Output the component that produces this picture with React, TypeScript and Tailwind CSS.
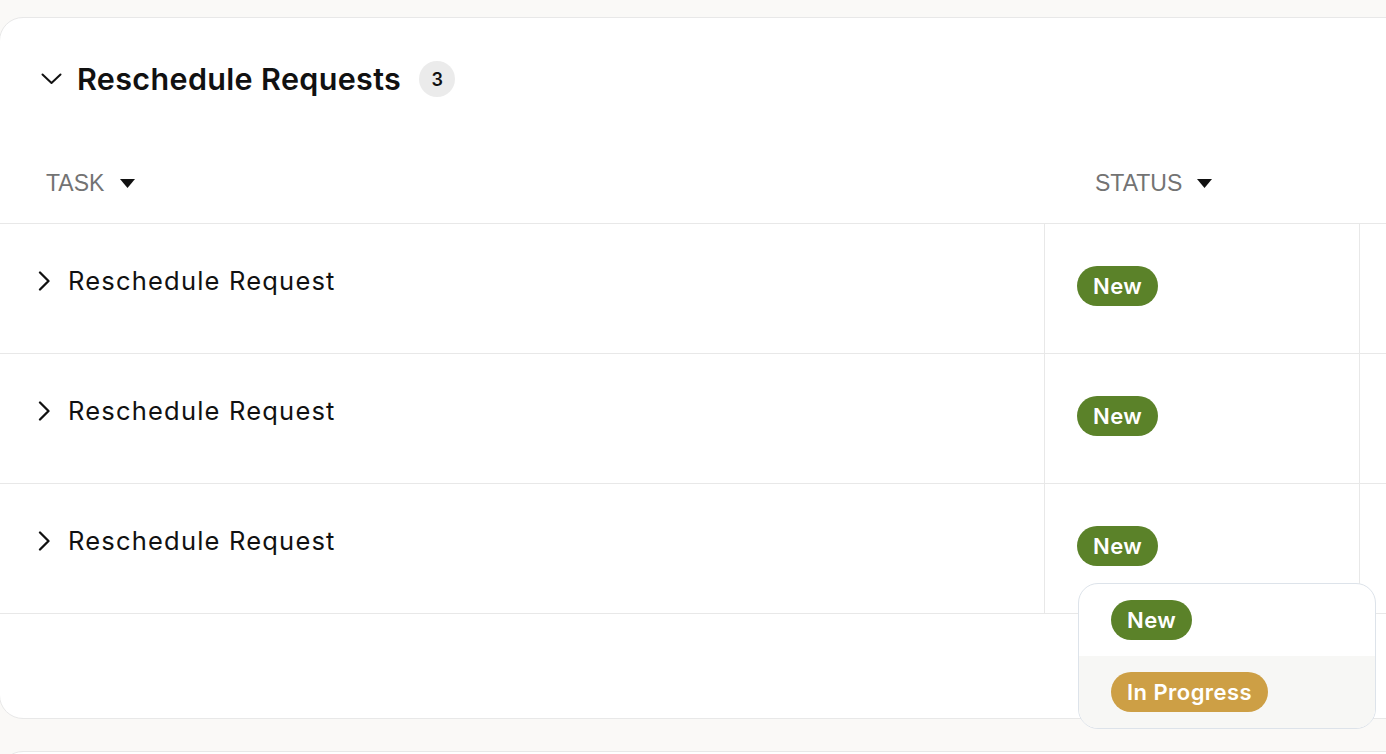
const rows = ['Reschedule Request', 'Reschedule Request', 'Reschedule Request'];

const SortCaret = () => (
  <svg width="15" height="9" viewBox="0 0 15 9" className="shrink-0">
    <path d="M0 0 L15 0 L7.5 9 Z" fill="#111" />
  </svg>
);

const Badge = ({ label, tone }: { label: string; tone: 'green' | 'gold' }) => (
  <span
    className={
      'inline-flex h-[40px] items-center rounded-full px-[16px] text-[22px] font-semibold leading-none tracking-[0.45px] text-white ' +
      (tone === 'green' ? 'bg-[#5b8229]' : 'bg-[#cd9f45]')
    }
  >
    {label}
  </span>
);

export default function App() {
  return (
    <div className="h-screen overflow-hidden bg-[#faf9f7] pt-[17px] font-['Inter',sans-serif] text-[#111]">
      {/* main card */}
      <div className="relative -ml-px h-[702px] w-[1440px] rounded-[24px] border border-[#e8e8e8] bg-white">
        <div className="flex h-[122px] items-center pl-[41px]">
          <svg width="21" height="12" viewBox="0 0 21 12" className="shrink-0">
            <path d="M1.5 1.5 L10.5 10 L19.5 1.5" fill="none" stroke="#111" strokeWidth="2" strokeLinecap="round" strokeLinejoin="round" />
          </svg>
          <h2 className="ml-[15px] text-[30.5px] font-semibold tracking-[0.35px]">Reschedule Requests</h2>
          <span className="ml-[18px] flex h-[36px] w-[36px] items-center justify-center rounded-full bg-[#ebebeb] text-[18px] font-semibold">
            3
          </span>
        </div>

        {/* header */}
        <div className="grid h-[84px] grid-cols-[1044px_315px_1fr] border-b border-[#e8e8e8] pt-[3px] font-['Liberation_Sans',sans-serif] text-[23px] text-[#737373]">
          <div className="flex items-center gap-[16px] pl-[46px]">
            <span>TASK</span>
            <SortCaret />
          </div>
          <div className="flex items-center gap-[15px] pl-[51px]">
            <span>STATUS</span>
            <SortCaret />
          </div>
          <div />
        </div>

        {/* rows */}
        {rows.map((r, i) => (
          <div key={i} className="grid h-[130px] grid-cols-[1044px_315px_1fr] border-b border-[#e8e8e8]">
            <div className="flex items-start pl-[38px] pt-[41px]">
              <div className="flex h-[32px] items-center">
                <svg width="13" height="20" viewBox="0 0 13 20" className="shrink-0">
                  <path d="M2 1.5 L10.5 10 L2 18.5" fill="none" stroke="#111" strokeWidth="2.3" strokeLinecap="round" strokeLinejoin="round" />
                </svg>
                <span className="ml-[17px] text-[25.5px] tracking-[1.2px]">{r}</span>
              </div>
            </div>
            <div className="border-l border-[#e8e8e8] pl-[32px] pt-[42px]">
              <Badge label="New" tone="green" />
            </div>
            <div className="border-l border-[#e8e8e8]" />
          </div>
        ))}

        {/* status dropdown */}
        <div className="absolute left-[1078px] top-[565px] flex w-[298px] flex-col overflow-hidden rounded-[20px] border border-[#dde3ea] bg-white">
          <div className="flex h-[72px] items-center pl-[32px]">
            <Badge label="New" tone="green" />
          </div>
          <div className="flex h-[72px] items-center bg-[#f7f7f5] pl-[32px]">
            <Badge label="In Progress" tone="gold" />
          </div>
        </div>
      </div>

      {/* next card */}
      <div className="-ml-px mt-[32px] h-[200px] w-[1440px] rounded-[24px] border border-[#e8e8e8] bg-white" />
    </div>
  );
}
